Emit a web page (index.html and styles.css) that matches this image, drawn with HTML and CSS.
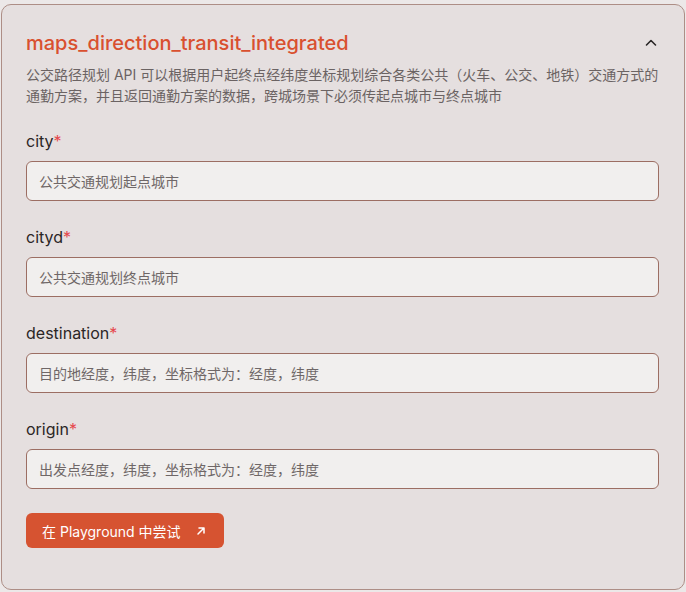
FILE: index.html
```html
<!DOCTYPE html>
<html lang="zh">
<head>
<meta charset="utf-8">
<link rel="stylesheet" href="styles.css">
</head>
<body>
<section class="card">
  <header class="head">
    <h2 class="title">maps_direction_transit_integrated</h2>
    <svg class="chev" width="14" height="14" viewBox="0 0 14 14"><path d="M2.5 9 L7 4.5 L11.5 9" fill="none" stroke="#2a2626" stroke-width="1.6" stroke-linecap="round" stroke-linejoin="round"/></svg>
  </header>
  <p class="desc">公交路径规划 API 可以根据用户起终点经纬度坐标规划综合各类公共（火车、公交、地铁）交通方式的通勤方案，并且返回通勤方案的数据，跨城场景下必须传起点城市与终点城市</p>
  <div class="field">
    <label class="label">city<span class="req">*</span></label>
    <div class="input">公共交通规划起点城市</div>
  </div>
  <div class="field">
    <label class="label">cityd<span class="req">*</span></label>
    <div class="input">公共交通规划终点城市</div>
  </div>
  <div class="field">
    <label class="label">destination<span class="req">*</span></label>
    <div class="input">目的地经度，纬度，坐标格式为：经度，纬度</div>
  </div>
  <div class="field">
    <label class="label">origin<span class="req">*</span></label>
    <div class="input">出发点经度，纬度，坐标格式为：经度，纬度</div>
  </div>
  <button class="btn">在 Playground 中尝试
    <svg class="arrow" width="12" height="12" viewBox="0 0 12 12"><path d="M3 9 L9 3 M4 3 H9 V8" fill="none" stroke="#fff" stroke-width="1.5" stroke-linecap="round" stroke-linejoin="round"/></svg>
  </button>
</section>
</body>
</html>
```
FILE: styles.css
```css
html, body {
  margin: 0;
  padding: 0;
  background: #ece8e8;
}
body {
  padding: 4px 1px 2px 1px;
  font-family: Inter, "Noto Sans CJK SC", sans-serif;
}
.card {
  box-sizing: border-box;
  height: 586px;
  border: 1px solid #ad8e86;
  border-radius: 10px;
  background: #e5dfdf;
  padding: 24px 25px 40px 24px;
}
.head {
  display: flex;
  align-items: center;
  justify-content: space-between;
  padding-right: 1px;
}
.title {
  margin: 0;
  font-size: 20px;
  font-weight: 500;
  line-height: 28px;
  color: #d9502f;
}
.chev { display: block; }
.desc {
  margin: 7px -8px 0 0;
  font-size: 14px;
  line-height: 21px;
  color: #6b6363;
}
.field {
  margin-top: 23px;
  display: flex;
  flex-direction: column;
  gap: 8px;
}
.field + .field { margin-top: 24px; }
.label {
  font-size: 16px;
  line-height: 24px;
  color: #2b2626;
}
.req { color: #e5484d; }
.input {
  box-sizing: border-box;
  height: 40px;
  border: 1px solid #9c6e63;
  border-radius: 6px;
  background: #f1efee;
  padding: 0 12px;
  display: flex;
  align-items: center;
  font-size: 14px;
  color: #6f6767;
}
.btn {
  margin-top: 24px;
  height: 35px;
  display: inline-flex;
  align-items: center;
  gap: 14px;
  padding: 0 17px 0 16px;
  border: none;
  border-radius: 6px;
  background: #d65331;
  color: #fff;
  font-family: Inter, "Noto Sans CJK SC", sans-serif;
  font-size: 14px;
}
.arrow { display: block; }
```
